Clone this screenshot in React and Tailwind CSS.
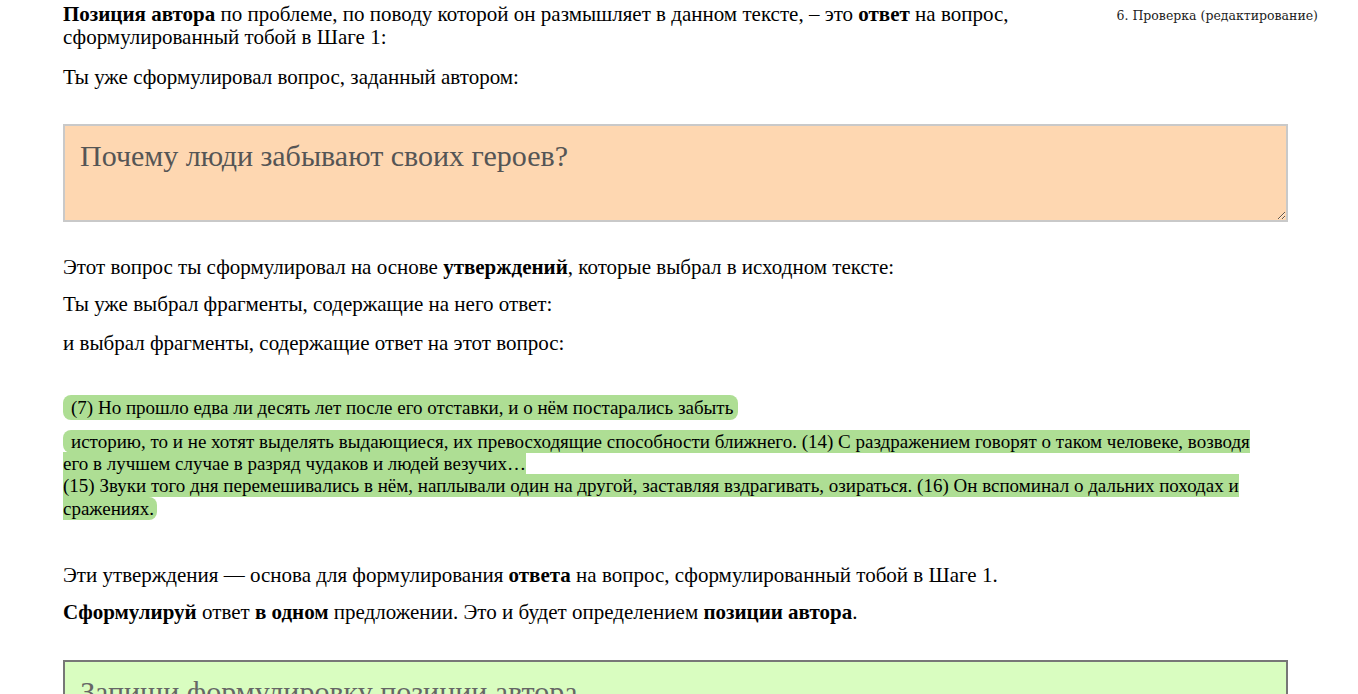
import React from "react";

const Para = ({ className = "", children }) => (
  <p className={`leading-[23px] ${className}`}>{children}</p>
);

export default function App() {
  return (
    <div className="min-h-screen bg-white [font-family:'Liberation_Serif',serif] text-[21px] text-black">
      <div className="ml-[63px] w-[1225px] pt-[3px] pb-10">
        {/* step label */}
        <div className="float-right -mr-[30px] pl-[12px] pt-[5px] [font-family:'DejaVu_Serif',serif] text-[12.5px] leading-[16px] text-[#222]">
          6. Проверка (редактирование)
        </div>

        <Para>
          <b>Позиция автора</b> по проблеме, по поводу которой он размышляет в данном тексте, – это{" "}
          <b>ответ</b> на вопрос, сформулированный тобой в Шаге 1:
        </Para>
        <Para className="mt-[17px]">Ты уже сформулировал вопрос, заданный автором:</Para>

        <textarea
          readOnly
          defaultValue="Почему люди забывают своих героев?"
          className="mt-[35px] block h-[98px] w-full border-2 border-[#c9c9c9] bg-[#fed7b1] px-[15px] py-[13px] [font-family:'Liberation_Serif',serif] text-[30px] leading-[34px] text-[#555] outline-none"
        />

        <Para className="mt-[34px]">
          Этот вопрос ты сформулировал на основе <b>утверждений</b>, которые выбрал в исходном тексте:
        </Para>
        <Para className="mt-[14px]">Ты уже выбрал фрагменты, содержащие на него ответ:</Para>
        <Para className="mt-[16px]">и выбрал фрагменты, содержащие ответ на этот вопрос:</Para>

        {/* selected fragments */}
        <div className="mt-[42px] text-[19px] leading-[22.5px]">
          <span className="rounded-[8px] bg-[#aede94] py-[2px] pl-[8px] pr-[5px]">
            (7) Но прошло едва ли десять лет после его отставки, и о нём постарались забыть
          </span>
        </div>
        <div className="mt-[11px] w-[1205px] text-[19px] leading-[22.4px]">
          <span className="rounded-[8px] bg-[#aede94] py-[1px] pl-[8px] pr-[3px]">
            историю, то и не хотят выделять выдающиеся, их превосходящие способности ближнего. (14) С
            раздражением говорят о таком человеке, возводя его в лучшем случае в разряд чудаков и людей
            везучих…{" "}
            <br />
            (15) Звуки того дня перемешивались в нём, наплывали один на другой, заставляя вздрагивать,
            озираться. (16) Он вспоминал о дальних походах и сражениях.
          </span>
        </div>

        <Para className="mt-[44px]">
          Эти утверждения — основа для формулирования <b>ответа</b> на вопрос, сформулированный тобой в Шаге 1.
        </Para>
        <Para className="mt-[14px]">
          <b>Сформулируй</b> ответ <b>в одном</b> предложении. Это и будет определением <b>позиции автора</b>.
        </Para>

        <textarea
          placeholder="Запиши формулировку позиции автора"
          className="mt-[36px] block h-[98px] w-full border-2 border-[#777] bg-[#d9fdc0] px-[15px] py-[13px] [font-family:'Liberation_Serif',serif] text-[30px] leading-[34px] text-[#555] outline-none placeholder:text-[#666]"
        />
      </div>
    </div>
  );
}
